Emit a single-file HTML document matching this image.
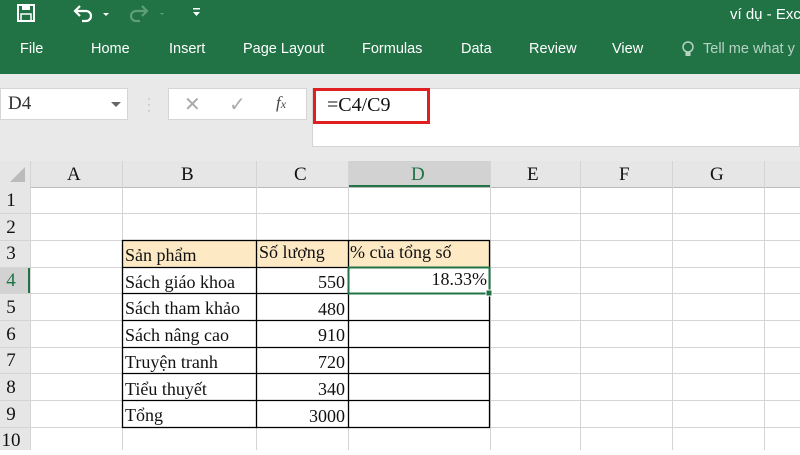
<!DOCTYPE html>
<html><head><meta charset="utf-8"><style>
body{margin:0;width:800px;height:450px;overflow:hidden;background:#fff;font-family:"Liberation Sans",sans-serif;position:relative}
.g{position:absolute;left:0;top:0;width:800px;height:74px;background:#217346;color:#fff;overflow:hidden}
.g span{position:absolute;font-size:14.5px;top:41px;white-space:nowrap}
.abs{position:absolute;white-space:nowrap}
.fb{position:absolute;left:0;top:74px;width:800px;height:87px;background:#e9e9e9}
.serif{font-family:"Liberation Serif",serif}
.cell{position:absolute;font-family:"Liberation Serif",serif;font-size:18px;color:#111;white-space:nowrap}
</style></head><body>
<div class="g">
 <svg class="abs" style="left:16px;top:3px" width="22" height="20" viewBox="0 0 22 20"><rect x="2" y="2" width="16" height="16" fill="none" stroke="#fff" stroke-width="2"/><rect x="6" y="2" width="8" height="5" fill="#fff"/><rect x="5" y="11" width="10" height="7" fill="none" stroke="#fff" stroke-width="1.5"/></svg>
 <svg class="abs" style="left:72px;top:3px" width="40" height="20" viewBox="0 0 40 20"><path d="M4 8 H14 a5 5 0 0 1 0 10 H10" fill="none" stroke="#fff" stroke-width="2.2"/><path d="M8 3 L3 8 L8 13" fill="none" stroke="#fff" stroke-width="2.2"/><path d="M31 10 l3 3 l3 -3z" fill="#fff"/></svg>
 <svg class="abs" style="left:128px;top:3px" width="40" height="20" viewBox="0 0 40 20"><path d="M18 8 H8 a5 5 0 0 0 0 10 H12" fill="none" stroke="#5f9e7a" stroke-width="2.2"/><path d="M14 3 L19 8 L14 13" fill="none" stroke="#5f9e7a" stroke-width="2.2"/><path d="M32 10 l2 2 l2 -2z" fill="#5f9e7a"/></svg>
 <svg class="abs" style="left:192px;top:6px" width="10" height="12"><rect x="1" y="2" width="7" height="1.5" fill="#fff"/><path d="M1 6 h7 l-3.5 4z" fill="#fff"/></svg>
 <span style="left:730px;top:6px;font-size:15px">ví dụ - Exc</span>
 <span style="left:20px">File</span><span style="left:91px">Home</span><span style="left:169px">Insert</span><span style="left:243px">Page Layout</span><span style="left:362px">Formulas</span><span style="left:461px">Data</span><span style="left:529px">Review</span><span style="left:612px">View</span>
 <svg class="abs" style="left:681px;top:40px" width="14" height="18"><circle cx="7" cy="7" r="5" fill="none" stroke="#b7d3c2" stroke-width="1.5"/><rect x="4.5" y="12" width="5" height="4" fill="#b7d3c2"/></svg><span style="left:703px;color:#b7d3c2">Tell me what y</span>
</div>
<div class="fb"></div>
<div class="abs" style="left:0;top:88px;width:128px;height:32px;background:#fff;border:1px solid #d4d4d4;box-sizing:border-box"></div>
<div class="abs serif" style="left:8px;top:93px;font-size:19px;color:#333">D4</div>
<div class="abs" style="left:111px;top:102px;border:5px solid transparent;border-top:5px solid #666"></div>
<div class="abs" style="left:147px;top:95px;color:#aaa;font-size:12px;line-height:6px">·<br>·<br>·</div>
<div class="abs" style="left:168px;top:88px;width:139px;height:32px;background:#fff;border:1px solid #d4d4d4;box-sizing:border-box"></div>
<div class="abs" style="left:184px;top:92px;font-size:20px;color:#aaa">✕</div>
<div class="abs" style="left:229px;top:92px;font-size:20px;color:#aaa">✓</div>
<div class="abs serif" style="left:276px;top:93px;font-size:17px;font-style:italic;color:#444">f<span style="font-size:12px">x</span></div>
<div class="abs" style="left:312px;top:88px;width:488px;height:59px;background:#fff;border:1px solid #d4d4d4;box-sizing:border-box"></div>
<div class="abs" style="left:313px;top:88px;width:117px;height:36px;border:3px solid #e02020;box-sizing:border-box"></div>
<div class="abs serif" style="left:327px;top:94px;font-size:20px;color:#111">=C4/C9</div>
<div class="abs" style="left:0;top:161px;width:800px;height:26px;background:#e6e6e6;border-bottom:1px solid #bbb"></div>
<div class="abs" style="left:348px;top:161px;width:142px;height:26px;background:#d2d2d2;border-bottom:2px solid #217346;box-sizing:border-box"></div>
<svg class="abs" style="left:8px;top:165px" width="18" height="18"><path d="M17 2 V17 H2z" fill="#bbb"/></svg>
<div class="abs" style="left:0;top:187px;width:30px;height:263px;background:#e6e6e6;border-right:1px solid #bbb"></div>
<div class="abs" style="left:0;top:267px;width:30px;height:26px;background:#d2d2d2;border-right:2px solid #217346;box-sizing:border-box"></div>
<svg class="abs" style="left:0;top:161px" width="800" height="289">
<g stroke="#d4d4d4" stroke-width="1">
<line x1="30.5" y1="0" x2="30.5" y2="289"/><line x1="122.5" y1="0" x2="122.5" y2="289"/><line x1="256.5" y1="0" x2="256.5" y2="289"/><line x1="348.5" y1="0" x2="348.5" y2="289"/><line x1="490.5" y1="0" x2="490.5" y2="289"/><line x1="580.5" y1="0" x2="580.5" y2="289"/><line x1="672.5" y1="0" x2="672.5" y2="289"/><line x1="764.5" y1="0" x2="764.5" y2="289"/>
<line x1="0" y1="52.5" x2="800" y2="52.5"/><line x1="0" y1="79.5" x2="800" y2="79.5"/><line x1="0" y1="106.5" x2="800" y2="106.5"/><line x1="0" y1="132.5" x2="800" y2="132.5"/><line x1="0" y1="159.5" x2="800" y2="159.5"/><line x1="0" y1="186.5" x2="800" y2="186.5"/><line x1="0" y1="212.5" x2="800" y2="212.5"/><line x1="0" y1="239.5" x2="800" y2="239.5"/><line x1="0" y1="266.5" x2="800" y2="266.5"/>
</g>
<rect x="122" y="79" width="368" height="27" fill="#fde9c4"/>
<g stroke="#000" stroke-width="1.3" fill="none">
<rect x="122.5" y="79.5" width="367" height="187"/>
<line x1="256.5" y1="79" x2="256.5" y2="266"/><line x1="348.5" y1="79" x2="348.5" y2="266"/>
<line x1="122" y1="106.5" x2="490" y2="106.5"/><line x1="122" y1="132.5" x2="490" y2="132.5"/><line x1="122" y1="159.5" x2="490" y2="159.5"/><line x1="122" y1="186.5" x2="490" y2="186.5"/><line x1="122" y1="212.5" x2="490" y2="212.5"/><line x1="122" y1="239.5" x2="490" y2="239.5"/>
</g>
<rect x="348.5" y="106.5" width="141" height="26" fill="none" stroke="#217346" stroke-width="2"/>
<rect x="486" y="129" width="6" height="6" fill="#217346" stroke="#fff" stroke-width="1"/>
</svg>
<div class="cell" style="left:67px;top:164px;font-size:19px">A</div>
<div class="cell" style="left:181px;top:164px;font-size:19px">B</div>
<div class="cell" style="left:294px;top:164px;font-size:19px">C</div>
<div class="cell" style="left:411px;top:164px;font-size:19px;color:#217346">D</div>
<div class="cell" style="left:527px;top:164px;font-size:19px">E</div>
<div class="cell" style="left:619px;top:164px;font-size:19px">F</div>
<div class="cell" style="left:710px;top:164px;font-size:19px">G</div>
<div class="cell" style="left:0;top:188px;width:22px;text-align:center;line-height:26.7px;font-size:19px">1<br>2<br>3<br><span style="color:#217346">4</span><br>5<br>6<br>7<br>8<br>9<br>10</div>
<div class="cell" style="left:125px;top:242px;line-height:26.7px">Sản phẩm<br>Sách giáo khoa<br>Sách tham khảo<br>Sách nâng cao<br>Truyện tranh<br>Tiểu thuyết<br>Tổng</div>
<div class="cell" style="left:259px;top:242px">Số lượng</div>
<div class="cell" style="left:258px;top:269px;width:87px;text-align:right;line-height:26.7px">550<br>480<br>910<br>720<br>340<br>3000</div>
<div class="cell" style="left:350px;top:242px">% của tổng số</div>
<div class="cell" style="left:350px;top:269px;width:137px;text-align:right">18.33%</div>
</body></html>
